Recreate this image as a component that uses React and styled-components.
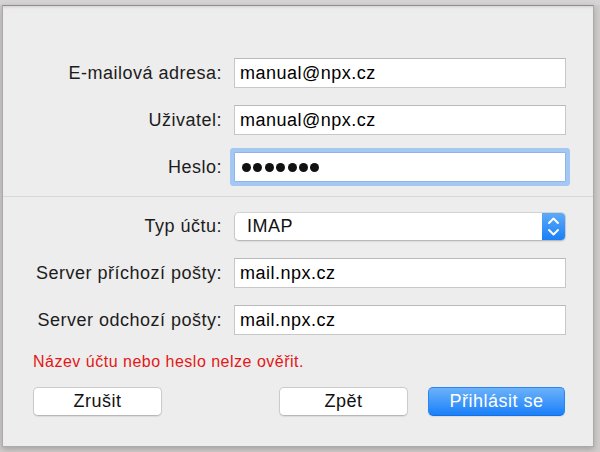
import React from "react";
import styled, { createGlobalStyle } from "styled-components";

const GlobalStyle = createGlobalStyle`
  html, body {
    margin: 0;
    padding: 0;
  }

  body {
    width: 600px;
    height: 452px;
    overflow: hidden;
    background: #cfcccb;
    font-family: "Liberation Sans", Arial, sans-serif;
  }
`;

const Desktop = styled.div`
  width: 600px;
  height: 452px;
  box-sizing: border-box;
  padding: 5px 6px 5px 2px;
  background: linear-gradient(to bottom, #d6d4d4 0, #d6d4d4 5px, #cfcccb 5px);
`;

const Sheet = styled.div`
  height: 100%;
  box-sizing: border-box;
  background: #ededed;
  border: 1px solid #ababab;
  border-top-color: #8e8e8e;
  box-shadow: 0 2px 6px rgba(0, 0, 0, 0.22), inset 0 3px 3px -2px rgba(0, 0, 0, 0.12);
  display: flex;
  flex-direction: column;
`;

const Section = styled.div`
  display: grid;
  grid-template-columns: 219px 332px;
  column-gap: 12px;
  row-gap: 17px;
  align-items: center;
  padding: ${(p) => p.$top}px 0 ${(p) => p.$bottom}px;
  border-bottom: ${(p) => (p.$divider ? "1px solid #d7d7d7" : "none")};
`;

const Label = styled.label`
  text-align: right;
  font-size: 18px;
  letter-spacing: 0.5px;
  color: #1c1c1c;
  white-space: nowrap;
`;

const Field = styled.input`
  height: 30px;
  box-sizing: border-box;
  margin: 0;
  padding: 0 0 0 5px;
  border: 1px solid #c7c7c7;
  border-top-color: #b9b9b9;
  border-radius: ${(p) => (p.$focused ? "1px" : "0")};
  background: #fff;
  font-family: inherit;
  font-size: 18px;
  letter-spacing: 0.5px;
  color: #000;
  outline: none;
  box-shadow: ${(p) => (p.$focused ? "0 0 0 4px #a4c8f3" : "none")};
`;

const SecretBox = styled.div`
  height: 30px;
  box-sizing: border-box;
  padding-left: 7px;
  display: flex;
  align-items: center;
  gap: 2.4px;
  border: 1px solid #8fb5e6;
  border-radius: 1px;
  background: #fff;
  box-shadow: 0 0 0 4px #a4c8f3;
`;

const Dot = styled.span`
  width: 9px;
  height: 9px;
  border-radius: 50%;
  background: #111;
`;

const Select = styled.div`
  height: 29px;
  box-sizing: border-box;
  display: flex;
  align-items: stretch;
  border: 1px solid #c9c9c9;
  border-top-color: #d2d2d2;
  border-bottom-color: #b9b9b9;
  border-radius: 5px;
  background: #fff;
  box-shadow: 0 1px 1px rgba(0, 0, 0, 0.08);
  overflow: hidden;
`;

const SelectValue = styled.span`
  flex: 1;
  display: flex;
  align-items: center;
  padding-left: 12px;
  font-size: 18px;
  letter-spacing: 0.5px;
  color: #111;
`;

const Stepper = styled.span`
  width: 23px;
  display: flex;
  align-items: center;
  justify-content: center;
  background: linear-gradient(to bottom, #5eaaf9, #1b7ff6);
`;

const ErrorText = styled.p`
  margin: 17px 0 0 30px;
  font-size: 16px;
  line-height: 20px;
  letter-spacing: 0.5px;
  color: #e31717;
`;

const Footer = styled.div`
  margin-top: 15px;
  padding: 0 28px 0 30px;
  display: flex;
  gap: 20px;
`;

const Button = styled.button`
  width: ${(p) => p.$width}px;
  height: 29px;
  margin: 0;
  margin-right: ${(p) => (p.$push ? "auto" : "0")};
  padding: 0;
  box-sizing: border-box;
  border: 1px solid ${(p) => (p.$primary ? "#2a86f3" : "#cbcbcb")};
  border-bottom-color: ${(p) => (p.$primary ? "#1770e0" : "#b8b8b8")};
  border-radius: 5px;
  background: ${(p) =>
    p.$primary ? "linear-gradient(to bottom, #6bb2fa, #1a80fa)" : "#fff"};
  box-shadow: 0 1px 1px rgba(0, 0, 0, 0.08);
  font-family: inherit;
  font-size: 18px;
  letter-spacing: 0.5px;
  color: ${(p) => (p.$primary ? "#fff" : "#111")};
`;

const Chevrons = () => (
  <svg width="23" height="27" viewBox="0 0 23 27">
    <polyline points="7,10 11.5,5.5 16,10" fill="none" stroke="#fff" strokeWidth="1.9" strokeLinecap="round" strokeLinejoin="round" />
    <polyline points="7,17 11.5,21.5 16,17" fill="none" stroke="#fff" strokeWidth="1.9" strokeLinecap="round" strokeLinejoin="round" />
  </svg>
);

export default function App() {
  return (
    <>
      <GlobalStyle />
      <Desktop>
        <Sheet>
          <Section $top={52} $bottom={14} $divider>
            <Label>E-mailová adresa:</Label>
            <Field readOnly defaultValue="manual@npx.cz" />
            <Label>Uživatel:</Label>
            <Field readOnly defaultValue="manual@npx.cz" />
            <Label>Heslo:</Label>
            <SecretBox>
              {Array.from({ length: 7 }).map((_, i) => (
                <Dot key={i} />
              ))}
            </SecretBox>
          </Section>
          <Section $top={15} $bottom={0}>
            <Label>Typ účtu:</Label>
            <Select>
              <SelectValue>IMAP</SelectValue>
              <Stepper>
                <Chevrons />
              </Stepper>
            </Select>
            <Label>Server příchozí pošty:</Label>
            <Field readOnly defaultValue="mail.npx.cz" />
            <Label>Server odchozí pošty:</Label>
            <Field readOnly defaultValue="mail.npx.cz" />
          </Section>
          <ErrorText>Název účtu nebo heslo nelze ověřit.</ErrorText>
          <Footer>
            <Button $width={129} $push>Zrušit</Button>
            <Button $width={129}>Zpět</Button>
            <Button $width={137} $primary>Přihlásit se</Button>
          </Footer>
        </Sheet>
      </Desktop>
    </>
  );
}
